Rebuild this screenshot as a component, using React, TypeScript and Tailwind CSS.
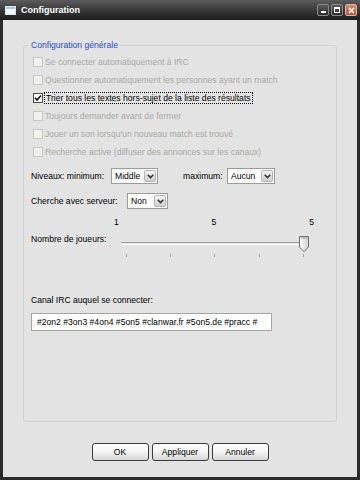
import React from "react";

const options = [
  { label: "Se connecter automatiquement à IRC", checked: false, enabled: false },
  { label: "Questionner automatiquement les personnes ayant un match", checked: false, enabled: false },
  { label: "Trier tous les textes hors-sujet de la liste des résultats", checked: true, enabled: true },
  { label: "Toujours demander avant de fermer", checked: false, enabled: false },
  { label: "Jouer un son lorsqu'un nouveau match est trouvé", checked: false, enabled: false },
  { label: "Recherche active (diffuser des annonces sur les canaux)", checked: false, enabled: false },
];

function CheckRow({ label, checked, enabled }: { label: string; checked: boolean; enabled: boolean }) {
  return (
    <div className="flex h-[18px] items-center pl-[2px]">
      <span
        className={
          enabled
            ? "flex h-[10px] w-[10px] items-center justify-center border border-[#4d4d4d] bg-white"
            : "h-[10px] w-[10px] border border-[#c9c8c0] bg-[#f1f1f1]"
        }
      >
        {checked && (
          <svg width="8" height="8" viewBox="0 0 8 8">
            <path d="M1 3.8 L3 6 L7 1.5" stroke="#111" strokeWidth="1.6" fill="none" />
          </svg>
        )}
      </span>
      {enabled ? (
        <span className="ml-[1px] border border-dotted border-black px-[1px] leading-[10px] text-black">{label}</span>
      ) : (
        <span className="ml-[2px] leading-[11px] text-[#a9a9a3]">{label}</span>
      )}
    </div>
  );
}

function Select({ value, width }: { value: string; width: string }) {
  return (
    <div className={`flex h-[16px] items-stretch border border-[#9c9c9c] bg-white ${width}`}>
      <span className="flex-1 pl-[3px] leading-[14px] text-black">{value}</span>
      <span className="m-[1px] flex w-[12px] items-center justify-center rounded-[2px] border border-[#b5b5b5] bg-gradient-to-b from-[#f6f6f6] to-[#cdcdcd]">
        <svg width="7" height="5" viewBox="0 0 7 5">
          <path d="M0.7 0.7 L3.5 3.6 L6.3 0.7" stroke="#333" strokeWidth="1.5" fill="none" />
        </svg>
      </span>
    </div>
  );
}

function Slider() {
  const ticks = [13, 57, 101, 146, 190];
  return (
    <svg width="202" height="30" viewBox="0 0 202 30">
      <rect x="8" y="14" width="185" height="3" fill="#e9e9e9" />
      <line x1="8" y1="14.5" x2="193" y2="14.5" stroke="#9d9d9d" />
      <line x1="8" y1="16.5" x2="193" y2="16.5" stroke="#ffffff" />
      {ticks.map((x) => (
        <line key={x} x1={x + 0.5} y1="26" x2={x + 0.5} y2="29" stroke="#a8a8a8" />
      ))}
      <defs>
        <linearGradient id="thumb" x1="0" y1="0" x2="1" y2="0">
          <stop offset="0" stopColor="#ffffff" />
          <stop offset="1" stopColor="#cfcfcf" />
        </linearGradient>
      </defs>
      <path d="M186.5 8.5 H195.5 V19 L191 23.5 L186.5 19 Z" fill="url(#thumb)" stroke="#6f6f6f" />
      <line x1="187.5" y1="10" x2="194.5" y2="10" stroke="#9a9a9a" />
    </svg>
  );
}

function Button({ children }: { children: React.ReactNode }) {
  return (
    <button className="h-[18px] w-[57px] rounded-[3px] border border-[#3c3c3c] bg-gradient-to-b from-[#ffffff] via-[#f3f3f3] to-[#d6d6d6] leading-[14px] text-black">
      {children}
    </button>
  );
}

export default function App() {
  return (
    <div className="flex h-[480px] w-[360px] flex-col bg-[#2b2b2b] px-[3px] pb-[3px] font-['Liberation_Sans',Arial,sans-serif] text-[8.6px]">
      <div className="-mx-[3px] flex h-[20px] items-center bg-gradient-to-b from-[#5c5c5c] via-[#3a3a3a] to-[#1c1c1c] pl-[5px] pr-[3px]">
        <span className="flex h-[9px] w-[11px] flex-col border border-[#d8e8f4] bg-[#f4faff]">
          <span className="h-[2px] bg-[#a9cbe6]" />
        </span>
        <span className="ml-[5px] flex-1 text-[9px] font-bold leading-[11px] text-white">Configuration</span>
        <div className="flex gap-[2px]">
          <span className="flex h-[12px] w-[12px] items-end justify-center rounded-[2px] border border-[#8a8a8a] bg-gradient-to-b from-[#5a5a5a] to-[#2e2e2e] pb-[2px]">
            <span className="h-[2px] w-[5px] bg-white" />
          </span>
          <span className="flex h-[12px] w-[12px] items-center justify-center rounded-[2px] border border-[#8a8a8a] bg-gradient-to-b from-[#5a5a5a] to-[#2e2e2e]">
            <span className="h-[6px] w-[6px] border border-t-2 border-white" />
          </span>
          <span className="flex h-[12px] w-[12px] items-center justify-center rounded-[2px] border border-[#e0b0a0] bg-gradient-to-b from-[#d98a72] to-[#b5543c]">
            <svg width="7" height="7" viewBox="0 0 7 7">
              <path d="M1 1 L6 6 M6 1 L1 6" stroke="#fff" strokeWidth="1.5" />
            </svg>
          </span>
        </div>
      </div>

      <div className="flex flex-1 flex-col bg-[#e3e3e3] px-[20px] pb-[16px] pt-[20px]">
        <fieldset className="min-w-0 flex-1 rounded-[3px] border border-[#d2d2d2] pl-[7px] pt-[2px]">
          <legend className="-ml-[1px] px-[1px] leading-[11px] text-[#1f4fc4]">Configuration générale</legend>

          {options.map((o) => (
            <CheckRow key={o.label} {...o} />
          ))}

          <div className="mt-[7px] flex items-center">
            <span className="w-[80px] leading-[11px] text-black">Niveaux: minimum:</span>
            <Select value="Middle" width="w-[47px]" />
            <span className="ml-[25px] w-[44px] leading-[11px] text-black">maximum:</span>
            <Select value="Aucun" width="w-[48px]" />
          </div>

          <div className="mt-[9px] flex items-center">
            <span className="w-[96px] leading-[11px] text-black">Cherche avec serveur:</span>
            <Select value="Non" width="w-[41px]" />
          </div>

          <div className="mt-[8px] flex">
            <span className="w-[82px] pt-[17px] leading-[11px] text-black">Nombre de joueurs:</span>
            <div className="flex w-[202px] flex-col">
              <div className="flex h-[11px] justify-between px-[1px] leading-[11px] text-black">
                <span>1</span>
                <span>5</span>
                <span>5</span>
              </div>
              <Slider />
            </div>
          </div>

          <div className="mt-[37px] leading-[11px] text-black">Canal IRC auquel se connecter:</div>
          <div className="mt-[7px] h-[18px] w-[241px] overflow-hidden whitespace-nowrap border border-[#a5a5a5] bg-white pl-[5px] leading-[16px] text-black">
            #2on2 #3on3 #4on4 #5on5 #clanwar.fr #5on5.de #pracc #
          </div>
        </fieldset>

        <div className="mt-[21px] flex justify-center gap-[3px]">
          <Button>OK</Button>
          <Button>Appliquer</Button>
          <Button>Annuler</Button>
        </div>
      </div>
    </div>
  );
}
